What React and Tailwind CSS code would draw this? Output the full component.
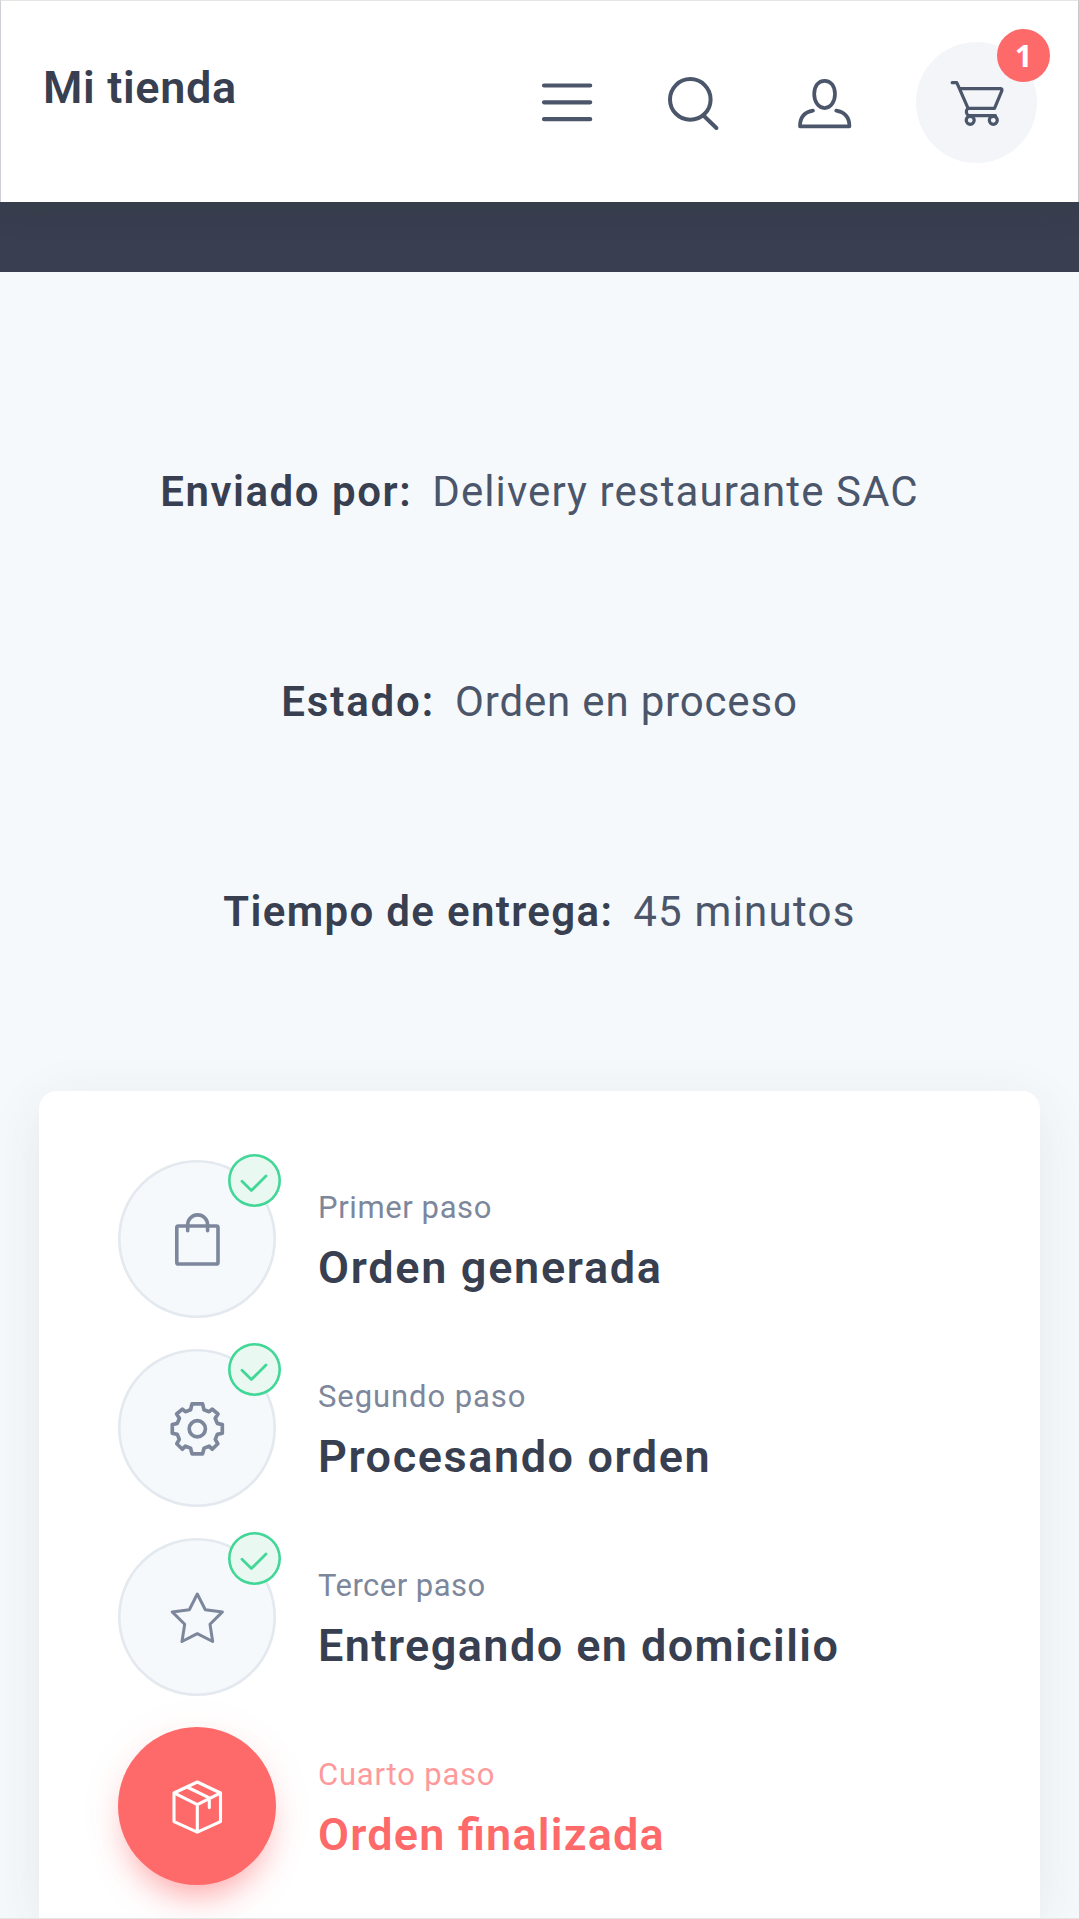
import React from "react";

function MenuIcon() {
  return (
    <svg className="h-[60px] w-[60px]" viewBox="537 73 60 60" fill="none" stroke="currentColor" strokeWidth="4.2" strokeLinecap="round">
      <path d="M544 85.5H590.2M544 102.3H590.2M544 119.2H590.2" />
    </svg>
  );
}

function SearchIcon() {
  return (
    <svg className="h-[60px] w-[60px]" viewBox="663 73 60 60" fill="none" stroke="currentColor" strokeWidth="4" strokeLinecap="round">
      <circle cx="690.3" cy="99.4" r="20.3" />
      <path d="M704.5 116.5L716.4 128" />
    </svg>
  );
}

function UserIcon() {
  return (
    <svg className="h-[60px] w-[60px]" viewBox="795 73 60 60" fill="none" stroke="currentColor" strokeWidth="3.7" strokeLinecap="round" strokeLinejoin="round">
      <path d="M824.6 80.8c-6.2 0-10.4 5-10.4 13.3 0 8.2 4.8 14 10.4 14s10.4-5.8 10.4-14c0-8.3-4.2-13.3-10.4-13.3Z" />
      <path d="M813 110.6C804.5 112 800 117.5 800 126.3H849.4C849.4 117.5 844.5 112 836.2 110.6" />
    </svg>
  );
}

function CartIcon() {
  return (
    <svg className="h-[60px] w-[60px]" viewBox="946.5 73.3 60 60" fill="none" stroke="currentColor" strokeWidth="3.2" strokeLinecap="round" strokeLinejoin="round">
      <path d="M951.7 83H956.3L967.6 108.6H994L1001.3 91.2Q1002 89 999.8 89H959.5" />
      <path d="M967 109C965.2 111 965.4 114.5 968.2 116H995" />
      <circle cx="969.7" cy="120.6" r="4" />
      <circle cx="992.8" cy="120.6" r="4" />
    </svg>
  );
}

function BagIcon() {
  return (
    <>
      <rect x="58.8" y="66" width="41.2" height="38" rx="1.6" />
      <path d="M69.7 70.8V64.8a9.9 9.9 0 0 1 19.9 0V70.8" />
    </>
  );
}

function GearIcon() {
  return (
    <>
      <circle cx="79.3" cy="79.8" r="8.1" />
      <path d="M74 54.9H84.6L86 60.7L91.2 62.7L94.2 60.1L100 65L97.2 69.3L99.3 74.4L104.3 75.6V84.2L99.3 85.4L97.3 90.4L99.8 94.7L94.2 100.2L91.2 97.1L86 99.2L84.6 104.9H74L72.6 99.2L67.4 97.1L64.4 100.2L58.8 94.7L61.3 90.4L59.3 85.4L54.3 84.2V75.6L59.3 74.4L61.4 69.3L58.6 65L64.4 60.1L67.4 62.7L72.6 60.7Z" />
    </>
  );
}

function StarIcon() {
  return (
    <path d="M79.3 56L87.3 71.7L104.4 73.9L92 86.3L94.7 103.5L79.3 95.7L64 103.5L66.7 86.3L54.2 73.9L71.3 71.7Z" />
  );
}

function BoxIcon() {
  return (
    <>
      <path d="M79.3 55L102.5 66V94.6L79.3 105.2L56 94.6V66Z" />
      <path d="M56.5 66.2L79.3 77.6L102.2 66.2M79.3 77.6V104.5M70 60.5L91.3 70.9V80.6" />
    </>
  );
}

const details = [
  { label: "Enviado por:", value: "Delivery restaurante SAC", labelCls: "tracking-[1.55px]", valueCls: "tracking-[1.09px]" },
  { label: "Estado:", value: "Orden en proceso", labelCls: "tracking-[1.85px]", valueCls: "tracking-[0.83px]" },
  { label: "Tiempo de entrega:", value: "45 minutos", labelCls: "tracking-[1.34px]", valueCls: "tracking-[1.25px]" },
];

const steps = [
  { step: "Primer paso", title: "Orden generada", Icon: BagIcon, stroke: 3.6, stepCls: "tracking-[0.6px]", titleCls: "tracking-[1.7px]" },
  { step: "Segundo paso", title: "Procesando orden", Icon: GearIcon, stroke: 3.7, stepCls: "tracking-[0.92px]", titleCls: "tracking-[1.58px]" },
  { step: "Tercer paso", title: "Entregando en domicilio", Icon: StarIcon, stroke: 3, stepCls: "tracking-[0.47px]", titleCls: "tracking-[1.42px]" },
  { step: "Cuarto paso", title: "Orden finalizada", Icon: BoxIcon, stroke: 3.1, stepCls: "tracking-[0.8px]", titleCls: "tracking-[1.22px] [font-feature-settings:'liga']", active: true },
];

function Header() {
  return (
    <header className="relative flex h-[202px] items-start justify-between border border-b-0 border-t-[#e5e5e5] border-l-[#cfcfd6] border-r-[#c8c8cc] bg-white pr-[41px] pl-[42px] text-[#4b566b] shadow-[0_6px_30px_-4px_rgba(45,65,60,0.45)]">
      <h1 className="mt-[60px] text-[45px] leading-[54px] font-semibold tracking-[0.65px] text-[#373f50]">Mi tienda</h1>
      <nav className="mt-[41px] flex h-[121px] items-center">
        <MenuIcon />
        <div className="ml-[66px] flex"><SearchIcon /></div>
        <div className="ml-[72px] flex"><UserIcon /></div>
        <div className="relative ml-[61px] flex size-[121px] items-center justify-center rounded-full bg-[#f3f5f9]">
          <CartIcon />
          <span className="absolute top-[-13px] right-[-13px] flex size-[53px] items-center justify-center rounded-full bg-[#fe696a] pb-[1px] font-['Open_Sans'] text-[31px] leading-none font-bold text-white">1</span>
        </div>
      </nav>
    </header>
  );
}

function Step({ step, title, Icon, stroke, stepCls, titleCls, active }) {
  return (
    <li className="flex items-center gap-[42px]">
      <div
        className={
          active
            ? "relative flex size-[158px] items-center justify-center rounded-full bg-[#fe696a] text-white shadow-[0_21px_34px_-13px_rgba(254,105,106,0.6),0_6px_40px_rgba(254,105,106,0.1)]"
            : "relative flex size-[158px] items-center justify-center rounded-full bg-[#f6f9fc] text-[#7d879c] inset-ring-[2.6px] inset-ring-[#e3e9ef]"
        }
      >
        <svg className="size-[54px]" viewBox="52 52 54 54" overflow="visible" fill="none" stroke="currentColor" strokeWidth={stroke} strokeLinecap="round" strokeLinejoin="round">
          <Icon />
        </svg>
        {!active && (
          <span className="absolute top-[-6px] right-[-5px] flex size-[53px] rounded-full bg-[#e9f9f1] text-[#42d697] inset-ring-[2.6px] inset-ring-[#42d697]">
            <svg className="size-full" viewBox="0 0 53 53" fill="none" stroke="currentColor" strokeWidth="2.8" strokeLinecap="round" strokeLinejoin="round">
              <path d="M14 27.2L23.4 36.5L38 22" />
            </svg>
          </span>
        )}
      </div>
      <div className={active ? "flex flex-col gap-[10px] pt-[2px] text-[#fe696a]" : "flex flex-col gap-[10px] pt-[2px] text-[#373f50]"}>
        <div className={active ? "text-[31px] leading-[46px] text-[#fe9a9b]" : "text-[31px] leading-[46px] text-[#7d879c]"}>
          <span className={stepCls}>{step}</span>
        </div>
        <h3 className="text-[45px] leading-[54px] font-semibold">
          <span className={titleCls}>{title}</span>
        </h3>
      </div>
    </li>
  );
}

export default function App() {
  return (
    <div className="flex h-[1919px] w-full flex-col overflow-hidden border-b border-[#e5e5e5] bg-[#f6f9fc] font-['Roboto',sans-serif]">
      <div className="h-[272px] shrink-0 overflow-hidden bg-[#393e50]">
        <Header />
      </div>
      <section className="mt-[114px] shrink-0 text-[42px] leading-[63px]">
        {details.map((d) => (
          <div key={d.label} className="flex h-[210px] items-center justify-center gap-[20px] text-[#4b566b]">
            <span className={`font-semibold text-[#373f50] ${d.labelCls}`}>{d.label}</span>
            <span className={d.valueCls}>{d.value}</span>
          </div>
        ))}
      </section>
      <main className="mx-[39px] mt-[75px] grow rounded-t-[18px] bg-white pt-[69px] pl-[79px] shadow-[0_12px_56px_-4px_rgba(35,60,60,0.1)]">
        <ul className="flex flex-col gap-[31px]">
          {steps.map((s) => (
            <Step key={s.step} {...s} />
          ))}
        </ul>
      </main>
    </div>
  );
}
